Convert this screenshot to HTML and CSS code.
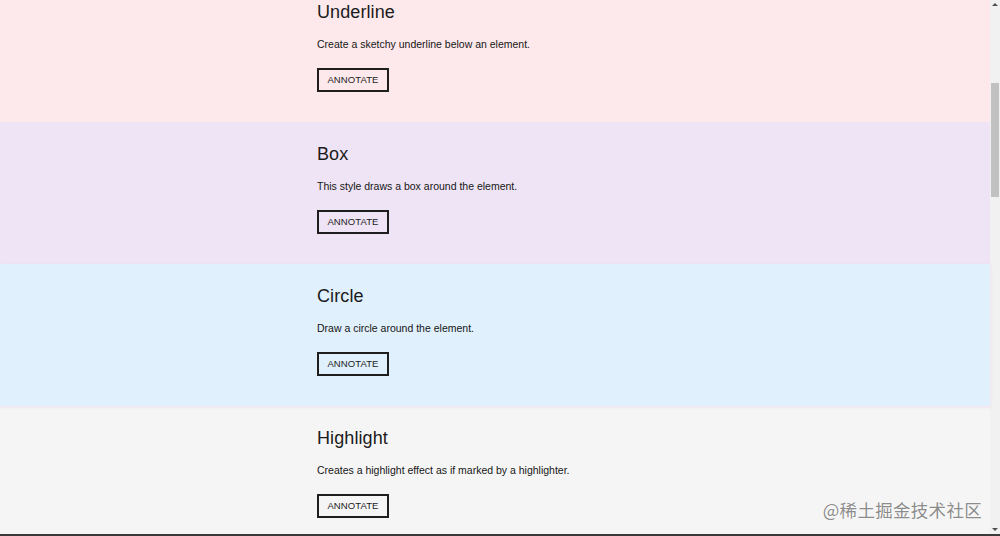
FILE: index.html
```html
<!DOCTYPE html>
<html lang="en">
<head>
<meta charset="utf-8">
<title>Annotations</title>
<link rel="stylesheet" href="styles.css">
</head>
<body>
<div class="viewport">
  <main class="page">
    <section class="demo demo-underline">
      <h2 class="demo-title">Underline</h2>
      <p class="demo-text">Create a sketchy underline below an element.</p>
      <button class="annotate-btn">ANNOTATE</button>
    </section>
    <section class="demo demo-box">
      <h2 class="demo-title">Box</h2>
      <p class="demo-text">This style draws a box around the element.</p>
      <button class="annotate-btn">ANNOTATE</button>
    </section>
    <section class="demo demo-circle">
      <h2 class="demo-title">Circle</h2>
      <p class="demo-text">Draw a circle around the element.</p>
      <button class="annotate-btn">ANNOTATE</button>
    </section>
    <section class="demo demo-highlight">
      <h2 class="demo-title">Highlight</h2>
      <p class="demo-text">Creates a highlight effect as if marked by a highlighter.</p>
      <button class="annotate-btn">ANNOTATE</button>
    </section>
  </main>
  <div class="scrollbar">
    <span class="sb-arrow sb-up"></span>
    <div class="sb-track"><div class="sb-thumb"></div></div>
    <span class="sb-arrow sb-down"></span>
  </div>
</div>
<div class="frame-line"></div>
<div class="watermark">@稀土掘金技术社区</div>
</body>
</html>
```
FILE: styles.css
```css
html, body {
  margin: 0;
  padding: 0;
  height: 536px;
  overflow: hidden;
  background: #f5f5f5;
  font-family: "Liberation Sans", Arial, sans-serif;
  color: #1b1b1b;
}

.viewport {
  display: flex;
  height: 534px;
  overflow: hidden;
}

.page {
  flex: 1;
  display: flex;
  flex-direction: column;
  margin-top: -20px;
}

.demo {
  height: 142px;
  box-sizing: border-box;
  padding: 20px 0 0 317px;
  display: flex;
  flex-direction: column;
  align-items: flex-start;
  flex-shrink: 0;
}

.demo-underline { background: #fde9eb; }
.demo-box { background: #efe4f5; }
.demo-circle {
  background: #e0f0fc;
  box-shadow: 0 1px 3px 0 rgba(240, 215, 240, 0.8);
  position: relative;
  z-index: 1;
}
.demo-highlight { background: #f5f5f5; height: 160px; }

.demo-title {
  margin: 0;
  font-size: 18px;
  line-height: 24px;
  font-weight: normal;
  letter-spacing: 0.1px;
}

.demo-text {
  margin: 12px 0 0;
  font-size: 10.5px;
  line-height: 16px;
  color: #161616;
}

.annotate-btn {
  margin-top: 16px;
  width: 72px;
  height: 24px;
  box-sizing: border-box;
  border: 2px solid #1e1e1e;
  background: transparent;
  font-family: "Liberation Sans", Arial, sans-serif;
  font-size: 9.5px;
  letter-spacing: 0.1px;
  color: #1b1b1b;
  padding: 0 0 2px;
}

.scrollbar {
  width: 10px;
  background: #f1f1f1;
  display: flex;
  flex-direction: column;
  align-items: center;
}

.sb-arrow {
  width: 0;
  height: 0;
  border-left: 3px solid transparent;
  border-right: 3px solid transparent;
  flex-shrink: 0;
}
.sb-up {
  margin-top: 3px;
  border-bottom: 3px solid #505050;
}
.sb-down {
  margin-bottom: 3px;
  border-top: 3px solid #505050;
}

.sb-track {
  flex: 1;
  width: 100%;
  display: flex;
  justify-content: center;
}
.sb-thumb {
  margin-top: 77px;
  width: 8px;
  height: 114px;
  background: #c1c1c1;
}

.frame-line {
  height: 2px;
  background: #3a3a3a;
}

.watermark {
  position: absolute;
  right: 18px;
  bottom: 14px;
  font-family: "Noto Sans CJK SC", "Liberation Sans", sans-serif;
  font-size: 17.5px;
  line-height: 24px;
  color: #8c8c8c;
  letter-spacing: 0.3px;
  text-shadow: 0 0 1px #fff, 0 0 2px #fff;
}
```
